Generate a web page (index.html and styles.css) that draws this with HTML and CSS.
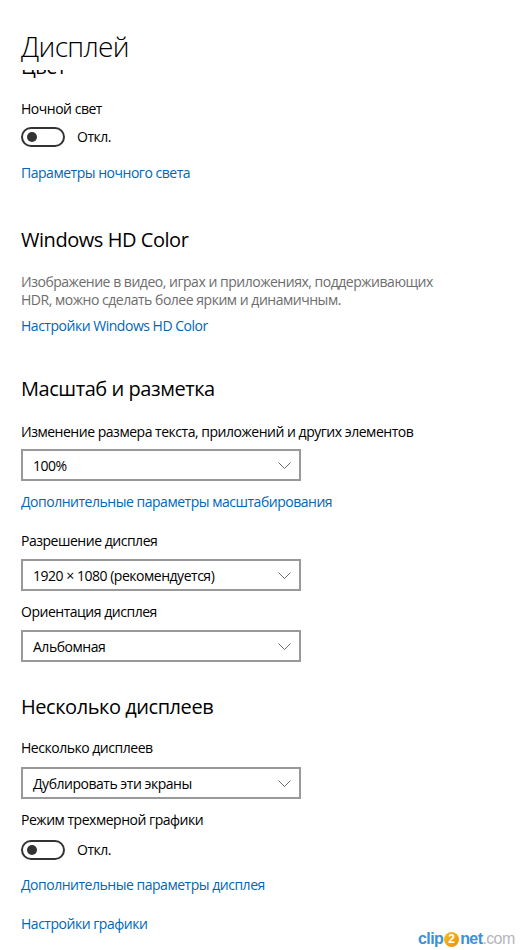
FILE: index.html
```html
<!DOCTYPE html>
<html lang="ru">
<head>
<meta charset="utf-8">
<title>Дисплей</title>
<link rel="stylesheet" href="styles.css">
</head>
<body>
<div class="window">
  <header class="page-header">
    <h1 class="page-title">Дисплей</h1>
  </header>
  <main class="viewport">
    <div class="content">
      <h2 class="section-title cut">Цвет</h2>
      <div class="label mt-18">Ночной свет</div>
      <div class="toggle-row mt-8">
        <span class="toggle"><span class="knob"></span></span>
        <span class="toggle-text">Откл.</span>
      </div>
      <a class="link mt-16">Параметры ночного света</a>

      <h2 class="section-title mt-43">Windows HD Color</h2>
      <p class="desc mt-19">Изображение в видео, играх и приложениях, поддерживающих HDR, можно сделать более ярким и динамичным.</p>
      <a class="link mt-7">Настройки Windows HD Color</a>

      <h2 class="section-title mt-39">Масштаб и разметка</h2>
      <div class="label mt-19">Изменение размера текста, приложений и других элементов</div>
      <div class="select mt-7"><span>100%</span><svg class="chev" width="13" height="7" viewBox="0 0 13 7"><path d="M0.5 0.5 L6.5 6.5 L12.5 0.5" fill="none" stroke="#6b6b6b" stroke-width="1"/></svg></div>
      <a class="link mt-11">Дополнительные параметры масштабирования</a>

      <div class="label mt-19">Разрешение дисплея</div>
      <div class="select mt-8"><span>1920 × 1080 (рекомендуется)</span><svg class="chev" width="13" height="7" viewBox="0 0 13 7"><path d="M0.5 0.5 L6.5 6.5 L12.5 0.5" fill="none" stroke="#6b6b6b" stroke-width="1"/></svg></div>

      <div class="label mt-11">Ориентация дисплея</div>
      <div class="select mt-8"><span>Альбомная</span><svg class="chev" width="13" height="7" viewBox="0 0 13 7"><path d="M0.5 0.5 L6.5 6.5 L12.5 0.5" fill="none" stroke="#6b6b6b" stroke-width="1"/></svg></div>

      <h2 class="section-title mt-31">Несколько дисплеев</h2>
      <div class="label mt-17">Несколько дисплеев</div>
      <div class="select mt-9"><span>Дублировать эти экраны</span><svg class="chev" width="13" height="7" viewBox="0 0 13 7"><path d="M0.5 0.5 L6.5 6.5 L12.5 0.5" fill="none" stroke="#6b6b6b" stroke-width="1"/></svg></div>

      <div class="label mt-11">Режим трехмерной графики</div>
      <div class="toggle-row mt-10">
        <span class="toggle"><span class="knob"></span></span>
        <span class="toggle-text">Откл.</span>
      </div>
      <a class="link mt-15">Дополнительные параметры дисплея</a>
      <a class="link mt-19">Настройки графики</a>
    </div>
  </main>
  <div class="watermark"><span class="wm-blue">clip</span><span class="wm-two">2</span><span class="wm-blue">net</span><span class="wm-gray">.com</span></div>
</div>
</body>
</html>
```
FILE: styles.css
```css
html, body {
  margin: 0;
  padding: 0;
  background: #fff;
}
body {
  font-family: "Open Sans", "Noto Sans", "Liberation Sans", sans-serif;
  color: #000;
  font-size: 14px;
  letter-spacing: -0.48px;
}
.window {
  position: relative;
  width: 526px;
  height: 950px;
  overflow: hidden;
  display: flex;
  flex-direction: column;
}
.page-header {
  height: 70px;
  flex: none;
  padding: 26px 0 0 21px;
  box-sizing: border-box;
}
.page-title {
  margin: 0;
  font-size: 28px;
  line-height: 40px;
  font-weight: 300;
  letter-spacing: -0.7px;
}
.viewport {
  flex: 1;
  overflow: hidden;
}
.content {
  padding-left: 21px;
  display: flex;
  flex-direction: column;
  align-items: flex-start;
}
.section-title {
  margin: 0;
  font-size: 20px;
  line-height: 28px;
  font-weight: 400;
  letter-spacing: -0.45px;
}
.section-title.cut { margin-top: -17px; }
.label {
  line-height: 20px;
}
.desc {
  margin-bottom: 0;
  width: 440px;
  line-height: 18px;
  color: #6d6d6d;
}
.link {
  line-height: 20px;
  color: #0067b8;
  cursor: pointer;
}
.toggle-row {
  display: flex;
  align-items: center;
  gap: 12px;
  height: 20px;
}
.toggle {
  box-sizing: border-box;
  width: 44px;
  height: 20px;
  border: 2px solid #333;
  border-radius: 10px;
  display: flex;
  align-items: center;
  padding-left: 4px;
}
.knob {
  width: 10px;
  height: 10px;
  border-radius: 50%;
  background: #333;
}
.toggle-text { line-height: 20px; }
.select {
  box-sizing: border-box;
  width: 280px;
  height: 32px;
  border: 2px solid #999;
  display: flex;
  align-items: center;
  justify-content: space-between;
  padding: 0 8px 0 10px;
}
.chev { display: block; }
.mt-7 { margin-top: 7px; }
.mt-8 { margin-top: 8px; }
.mt-9 { margin-top: 9px; }
.mt-10 { margin-top: 10px; }
.mt-11 { margin-top: 11px; }
.mt-15 { margin-top: 15px; }
.mt-16 { margin-top: 16px; }
.mt-17 { margin-top: 17px; }
.mt-18 { margin-top: 18px; }
.mt-19 { margin-top: 19px; }
.mt-31 { margin-top: 31px; }
.mt-39 { margin-top: 39px; }
.mt-43 { margin-top: 43px; }
.watermark {
  position: absolute;
  left: 418px;
  top: 929px;
  font-family: "Liberation Sans", sans-serif;
  font-size: 16px;
  font-weight: bold;
  letter-spacing: -0.6px;
  line-height: 20px;
  display: flex;
  align-items: center;
}
.wm-blue { color: #3d8fd6; }
.wm-gray { color: #b4b6bb; font-weight: normal; }
.wm-two {
  display: inline-flex;
  align-items: center;
  justify-content: center;
  width: 15px;
  height: 15px;
  border-radius: 50%;
  background: linear-gradient(135deg, #f7c21a, #f08a10);
  color: #fff;
  font-size: 12px;
  letter-spacing: 0;
  margin: 0 1px;
}
```
